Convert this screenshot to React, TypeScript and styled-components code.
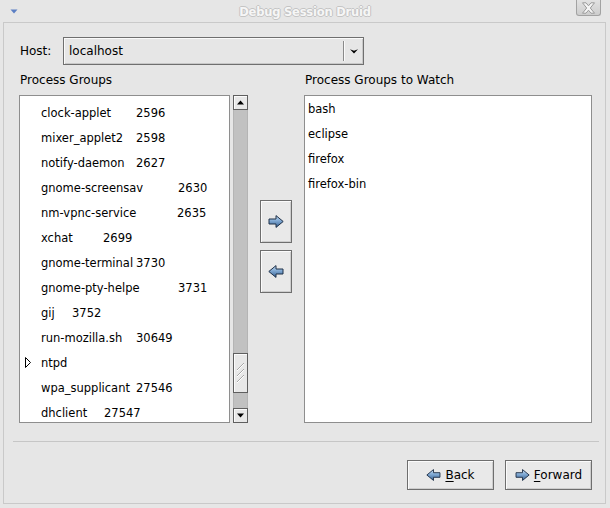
import React, { useId } from "react";
import styled, { createGlobalStyle } from "styled-components";

const Global = createGlobalStyle`
  html, body { margin: 0; padding: 0; background: #e6e6e6; }
  * { box-sizing: border-box; }
`;

const Window = styled.div`
  width: 610px;
  height: 508px;
  display: flex;
  flex-direction: column;
  background: #e6e6e6;
  font-family: "DejaVu Sans", "Bitstream Vera Sans", sans-serif;
  font-size: 12px;
  color: #000;
`;

const TitleBar = styled.div`
  height: 22px;
  display: grid;
  grid-template-columns: 1fr auto 1fr;
  align-items: start;
`;

const MenuSlot = styled.div`
  padding: 9px 0 0 10px;
  display: flex;
`;

const Title = styled.div`
  font-weight: bold;
  font-size: 11.5px;
  line-height: 14px;
  padding-top: 5px;
  color: #f6f6f6;
  text-shadow: 1px 0 0 #c4c4c4, -1px 0 0 #c4c4c4, 0 1px 0 #c4c4c4, 0 -1px 0 #c4c4c4;
  letter-spacing: -0.2px;
`;

const CloseSlot = styled.div`
  display: flex;
  justify-content: flex-end;
  padding-right: 9px;
`;

const CloseButton = styled.div`
  width: 25px;
  height: 16px;
  border: 1px solid #a2a2a2;
  border-top: none;
  border-radius: 0 0 3px 3px;
  background: linear-gradient(#e2e2e2, #cdcdcd);
  display: flex;
  align-items: center;
  justify-content: center;
`;

const Frame = styled.div`
  flex: 1;
  margin: 0 4px 4px 3px;
  border: 1px solid #c9c9c9;
  display: flex;
  flex-direction: column;
  padding: 14px 13px 13px 15px;
`;

const HostRow = styled.div`
  display: flex;
  align-items: center;
  height: 28px;
`;

const Label = styled.div`
  line-height: 16px;
  padding-left: 1px;
`;

const HostLabel = styled(Label)`
  width: 44px;
`;

const Combo = styled.div`
  width: 301px;
  height: 28px;
  border: 1px solid #6f6f6f;
  box-shadow: inset 1px 1px 0 #fafafa, inset -1px -1px 0 #c8c8c8;
  display: flex;
  align-items: center;
`;

const ComboText = styled.div`
  flex: 1;
  padding-left: 5px;
`;

const ComboSep = styled.div`
  width: 2px;
  height: 20px;
  border-left: 1px solid #8a8a8a;
  border-right: 1px solid #fafafa;
`;

const ComboArrow = styled.div`
  width: 18px;
  display: flex;
  justify-content: center;
`;

const Lists = styled.div`
  margin-top: 7px;
  display: grid;
  grid-template-columns: 229px 32px 1fr;
  grid-template-rows: 16px 328px;
  column-gap: 12px;
  row-gap: 7px;
`;

const MoveColumn = styled.div`
  grid-column: 2;
  grid-row: 1 / span 2;
  align-self: center;
  display: flex;
  flex-direction: column;
  gap: 7px;
  transform: translateY(-1px);
`;

const ToolButton = styled.div`
  width: 32px;
  height: 43px;
  border: 1px solid #6e6e6e;
  box-shadow: inset 1px 1px 0 #fbfbfb, inset -1px -1px 0 #cdcdcd;
  background: #e9e9e9;
  display: flex;
  align-items: center;
  justify-content: center;
`;

const ScrolledList = styled.div`
  grid-column: 1;
  grid-row: 2;
  display: flex;
  gap: 3px;
  height: 328px;
`;

const ListBox = styled.div<{ $padTop: number; $padLeft: number }>`
  flex: 1;
  border: 1px solid #8e8e8e;
  background: #fff;
  overflow: hidden;
  font-size: 11.5px;
  padding-top: ${(p) => p.$padTop}px;
  padding-left: ${(p) => p.$padLeft}px;
`;

const WatchList = styled(ListBox)`
  grid-column: 3;
  grid-row: 2;
`;

const WatchLabel = styled(Label)`
  grid-column: 3;
  grid-row: 1;
`;

const Row = styled.div`
  height: 25px;
  display: flex;
  align-items: center;
  white-space: nowrap;
`;

const ExpanderSlot = styled.div`
  width: 21px;
  padding-left: 5px;
  display: flex;
  align-items: center;
`;

const Name = styled.span<{ $w: number }>`
  display: inline-block;
  min-width: ${(p) => p.$w}px;
`;

const Scrollbar = styled.div`
  width: 15px;
  display: flex;
  flex-direction: column;
`;

const StepButton = styled.div`
  width: 15px;
  height: 15px;
  border: 1px solid #5f5f5f;
  background: #e8e8e8;
  box-shadow: inset 1px 1px 0 #fbfbfb;
  display: flex;
  align-items: center;
  justify-content: center;
`;

const Trough = styled.div<{ $offset: number }>`
  flex: 1;
  background: #c1c1c1;
  border-left: 1px solid #b4b4b4;
  border-right: 1px solid #b4b4b4;
  padding-top: ${(p) => p.$offset}px;
`;

const Thumb = styled.div`
  height: 40px;
  margin: 0 -1px;
  border: 1px solid #5f5f5f;
  background: #e8e8e8;
  box-shadow: inset 1px 1px 0 #fbfbfb;
  display: flex;
  align-items: center;
  justify-content: center;
`;

const Separator = styled.div`
  margin: 18px -7px 0 -6px;
  height: 1px;
  background: #c6c6c6;
`;

const ButtonRow = styled.div`
  margin-top: 18px;
  display: flex;
  justify-content: flex-end;
  gap: 11px;
`;

const PushButton = styled.div`
  width: 87px;
  height: 30px;
  border: 1px solid #6e6e6e;
  box-shadow: inset 1px 1px 0 #fbfbfb, inset -1px -1px 0 #cdcdcd;
  background: #e9e9e9;
  display: flex;
  align-items: center;
  justify-content: center;
  gap: 4px;
`;

const Mnemonic = styled.span`
  text-decoration: underline;
  text-underline-offset: 2px;
`;

const BlockArrow = ({ dir, w = 16, h = 13 }: { dir: "left" | "right"; w?: number; h?: number }) => {
  const id = useId().replace(/:/g, "");
  return (
    <svg width={w} height={h} viewBox="0 0 16 13">
      <defs>
        <linearGradient id={id} x1="0" y1="0" x2="0" y2="1">
          <stop offset="0" stopColor="#c4dcf2" />
          <stop offset="0.45" stopColor="#7fa8d3" />
          <stop offset="1" stopColor="#365f8f" />
        </linearGradient>
      </defs>
      <path
        d="M1 4H8V0.6L15.2 6.5L8 12.4V9H1Z"
        fill={`url(#${id})`}
        stroke="#1f3048"
        strokeWidth="1"
        strokeLinejoin="round"
        transform={dir === "left" ? "translate(16,0) scale(-1,1)" : undefined}
      />
    </svg>
  );
};

const groups: { name: string; pid?: string; w: number; expander?: boolean }[] = [
  { name: "clock-applet", pid: "2596", w: 95 },
  { name: "mixer_applet2", pid: "2598", w: 95 },
  { name: "notify-daemon", pid: "2627", w: 95 },
  { name: "gnome-screensav", pid: "2630", w: 137 },
  { name: "nm-vpnc-service", pid: "2635", w: 136 },
  { name: "xchat", pid: "2699", w: 62 },
  { name: "gnome-terminal", pid: "3730", w: 95 },
  { name: "gnome-pty-helpe", pid: "3731", w: 137 },
  { name: "gij", pid: "3752", w: 31 },
  { name: "run-mozilla.sh", pid: "30649", w: 95 },
  { name: "ntpd", w: 0, expander: true },
  { name: "wpa_supplicant", pid: "27546", w: 95 },
  { name: "dhclient", pid: "27547", w: 63 },
];

const watched = ["bash", "eclipse", "firefox", "firefox-bin"];

export default function App() {
  return (
    <Window>
      <Global />
      <TitleBar>
        <MenuSlot>
          <svg width="8" height="5" viewBox="0 0 8 5">
            <path d="M0.5 0.5H7.5L4 4.5Z" fill="#5b7fc4" />
          </svg>
        </MenuSlot>
        <Title>Debug Session Druid</Title>
        <CloseSlot>
          <CloseButton>
            <svg width="15" height="12" viewBox="0 0 15 12">
              <path
                d="M1.5 0.8H5L7.5 3.8L10 0.8H13.5L9.3 6L13.5 11.2H10L7.5 8.2L5 11.2H1.5L5.7 6Z"
                fill="#f4f4f4"
                stroke="#9a9a9a"
                strokeWidth="1"
                strokeLinejoin="round"
              />
            </svg>
          </CloseButton>
        </CloseSlot>
      </TitleBar>
      <Frame>
        <HostRow>
          <HostLabel>Host:</HostLabel>
          <Combo>
            <ComboText>localhost</ComboText>
            <ComboSep />
            <ComboArrow>
              <svg width="8" height="5" viewBox="0 0 8 5">
                <path d="M0 0.3L4 4.6L8 0.3L4 1.8Z" fill="#000" />
              </svg>
            </ComboArrow>
          </Combo>
        </HostRow>
        <Lists>
          <Label>Process Groups</Label>
          <ScrolledList>
            <ListBox $padTop={4} $padLeft={0}>
              {groups.map((g) => (
                <Row key={g.name}>
                  <ExpanderSlot>
                    {g.expander && (
                      <svg width="6" height="11" viewBox="0 0 6 11">
                        <path d="M0.5 0.5L5.5 5.5L0.5 10.5Z" fill="#fff" stroke="#000" strokeWidth="1" />
                      </svg>
                    )}
                  </ExpanderSlot>
                  <Name $w={g.w}>{g.name}</Name>
                  {g.pid && <span>{g.pid}</span>}
                </Row>
              ))}
            </ListBox>
            <Scrollbar>
              <StepButton>
                <svg width="7" height="5" viewBox="0 0 7 5">
                  <path d="M0 4.5H7L3.5 0.5Z" fill="#000" />
                </svg>
              </StepButton>
              <Trough $offset={243}>
                <Thumb>
                  <svg width="9" height="22" viewBox="0 0 9 22">
                    <path d="M1 8L8 1M1 14L8 7M1 20L8 13" stroke="#a8a8a8" strokeWidth="1" />
                    <path d="M1 9L8 2M1 15L8 8M1 21L8 14" stroke="#ffffff" strokeWidth="1" />
                  </svg>
                </Thumb>
              </Trough>
              <StepButton>
                <svg width="7" height="5" viewBox="0 0 7 5">
                  <path d="M0 0.5H7L3.5 4.5Z" fill="#000" />
                </svg>
              </StepButton>
            </Scrollbar>
          </ScrolledList>
          <MoveColumn>
            <ToolButton>
              <BlockArrow dir="right" />
            </ToolButton>
            <ToolButton>
              <BlockArrow dir="left" />
            </ToolButton>
          </MoveColumn>
          <WatchLabel>Process Groups to Watch</WatchLabel>
          <WatchList $padTop={0} $padLeft={3}>
            {watched.map((w) => (
              <Row key={w}>{w}</Row>
            ))}
          </WatchList>
        </Lists>
        <Separator />
        <ButtonRow>
          <PushButton>
            <BlockArrow dir="left" w={15} h={12} />
            <span>
              <Mnemonic>B</Mnemonic>ack
            </span>
          </PushButton>
          <PushButton>
            <BlockArrow dir="right" w={15} h={12} />
            <span>
              <Mnemonic>F</Mnemonic>orward
            </span>
          </PushButton>
        </ButtonRow>
      </Frame>
    </Window>
  );
}
